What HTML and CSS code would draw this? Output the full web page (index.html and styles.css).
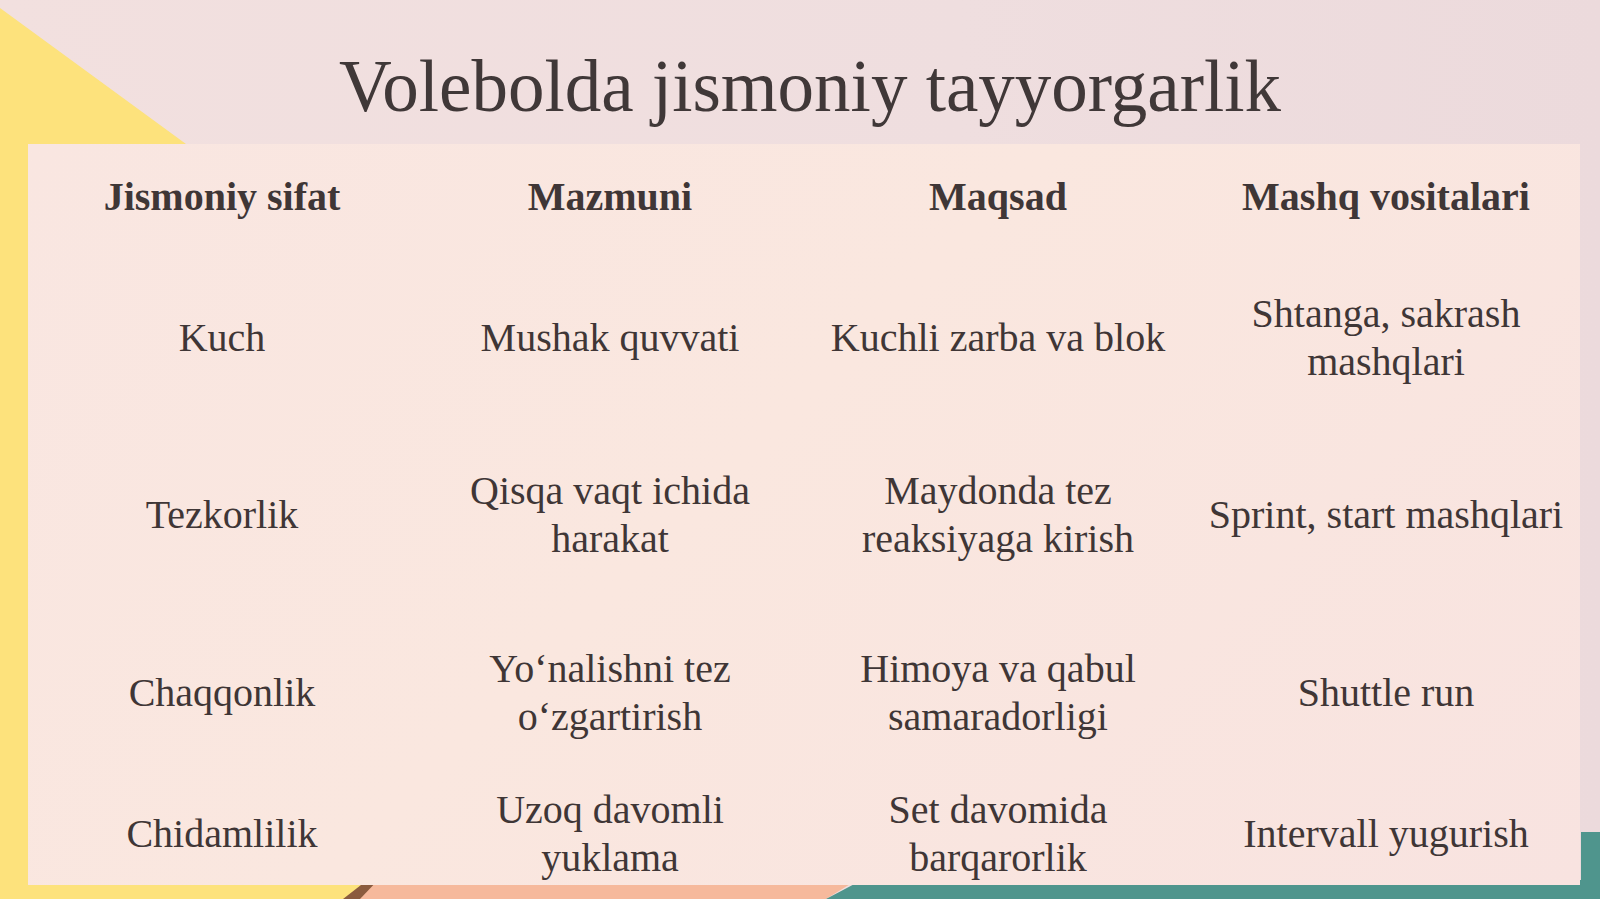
FILE: index.html
```html
<!DOCTYPE html>
<html>
<head>
<meta charset="utf-8">
<link rel="stylesheet" href="styles.css">
</head>
<body>
<div class="slide">
  <svg class="bg" width="1600" height="899" viewBox="0 0 1600 899">
    <polygon points="0,8 186,144 28,144 28,899 0,899" fill="#fde27c"/>
    <polygon points="0,880 370,880 345,899 0,899" fill="#fde27c"/>
    <polygon points="370,878 390,878 368,899 343,899" fill="#8b5b3e"/>
    <polygon points="380,878 860,878 826,899 360,899" fill="#f6b99c"/>
    <polygon points="862,880 1581,880 1581,832 1600,832 1600,899 826,899" fill="#4f958d"/>
  </svg>
  <h1 class="title">Volebolda jismoniy tayyorgarlik</h1>
  <div class="card">
    <div class="grid">
      <div class="cell head">Jismoniy sifat</div>
      <div class="cell head">Mazmuni</div>
      <div class="cell head">Maqsad</div>
      <div class="cell head">Mashq vositalari</div>

      <div class="cell">Kuch</div>
      <div class="cell">Mushak quvvati</div>
      <div class="cell">Kuchli zarba va blok</div>
      <div class="cell">Shtanga, sakrash<br>mashqlari</div>

      <div class="cell">Tezkorlik</div>
      <div class="cell">Qisqa vaqt ichida<br>harakat</div>
      <div class="cell">Maydonda tez<br>reaksiyaga kirish</div>
      <div class="cell">Sprint, start mashqlari</div>

      <div class="cell">Chaqqonlik</div>
      <div class="cell">Yo‘nalishni tez<br>o‘zgartirish</div>
      <div class="cell">Himoya va qabul<br>samaradorligi</div>
      <div class="cell">Shuttle run</div>

      <div class="cell">Chidamlilik</div>
      <div class="cell">Uzoq davomli<br>yuklama</div>
      <div class="cell">Set davomida<br>barqarorlik</div>
      <div class="cell">Intervall yugurish</div>
    </div>
  </div>
</div>
</body>
</html>
```
FILE: styles.css
```css
html, body {
  margin: 0;
  padding: 0;
}
body {
  width: 1600px;
  height: 899px;
  overflow: hidden;
  background: #f0dfe0;
  font-family: "Liberation Serif", "Times New Roman", serif;
  color: #3f3636;
}
.slide {
  position: relative;
  width: 1600px;
  height: 899px;
  background: linear-gradient(90deg, #f2e0df 0%, #efdedf 60%, #ecdadc 100%);
}
.bg {
  position: absolute;
  left: 0;
  top: 0;
}
.title {
  position: relative;
  margin: 0;
  height: 144px;
  display: flex;
  align-items: center;
  justify-content: center;
  padding-left: 20px;
  box-sizing: border-box;
  padding-top: 28px;
  font-weight: normal;
  font-size: 73px;
  color: #403838;
  line-height: 1;
}
.card {
  position: relative;
  margin-left: 28px;
  width: 1552px;
  height: 741px;
  background: linear-gradient(135deg, #f9e6e1 0%, #fae7df 45%, #f8e3e0 100%);
}
.grid {
  display: grid;
  grid-template-columns: repeat(4, 1fr);
  grid-template-rows: 106px 176px 178px 178px 104px;
}
.cell {
  display: flex;
  align-items: center;
  justify-content: center;
  text-align: center;
  font-size: 40px;
  line-height: 48px;
  color: #3f3636;
}
.head {
  font-weight: bold;
  font-size: 40px;
}
```
